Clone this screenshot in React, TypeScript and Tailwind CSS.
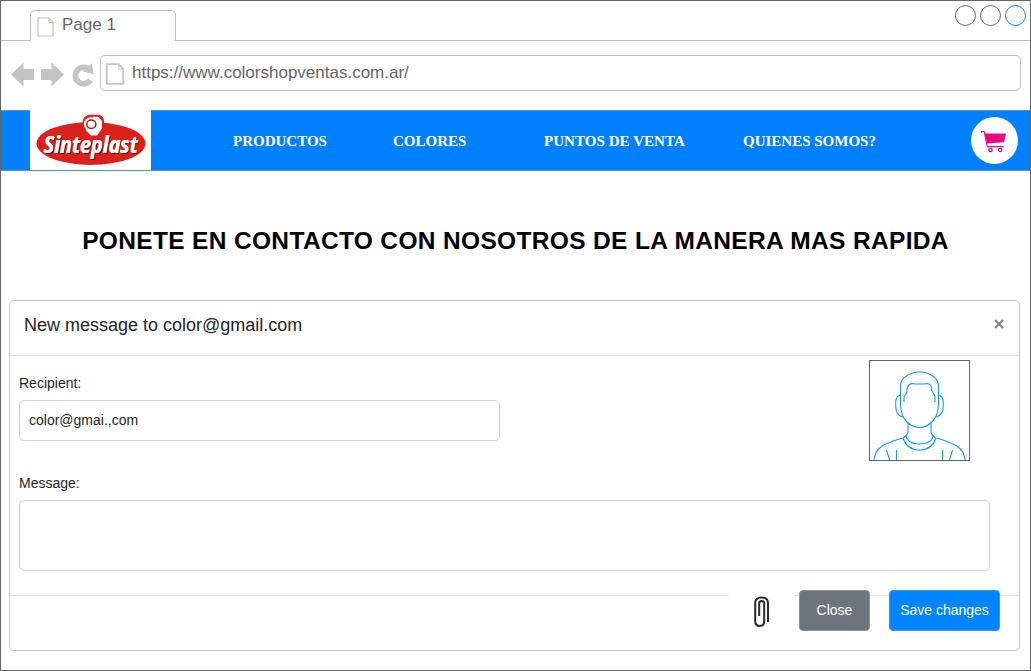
import React from "react";

function PageIcon({ className, stroke, width }: { className?: string; stroke: string; width: number }) {
  return (
    <svg className={className} viewBox="0 0 17 20" fill="none" stroke={stroke}>
      <path strokeWidth={width} d="M1 1H12L16 5.5V19H1Z" />
      <path strokeWidth="1" d="M12 1V5.5H16" />
    </svg>
  );
}

function TabStrip() {
  return (
    <div className="flex h-[40px] shrink-0">
      <div className="w-[29px] border-b border-[#bfbfbf]" />
      <div className="mt-[9px] flex w-[146px] rounded-t-[5px] border border-b-0 border-[#bfbfbf] pl-[5.5px]">
        <PageIcon className="mt-[5.5px] h-[20px] w-[17px]" stroke="#c0c0c0" width={1.2} />
        <span className="ml-[8.5px] mt-[2px] text-[17px] leading-[24px] whitespace-nowrap text-[#666666]">Page 1</span>
      </div>
      <div className="flex flex-1 justify-end gap-[4px] border-b border-[#bfbfbf] pt-[4px] pr-[4px]">
        <div className="size-[21px] rounded-full border border-[#666666]" />
        <div className="size-[21px] rounded-full border border-[#666666]" />
        <div className="size-[21px] rounded-full border border-[#008cff]" />
      </div>
    </div>
  );
}

function AddressBar() {
  return (
    <div className="flex h-[69px] shrink-0 pt-[14px] pr-[9px] pl-[10px]">
      <svg className="mt-[6px] h-[26px] w-[84px]" viewBox="11 61 84 26" fill="#c4c4c4">
        <path d="M11 74.5L23.5 62.5V69H34V80H23.5V86.5Z" />
        <path d="M64 74.5L51.5 62.5V69H41V80H51.5V86.5Z" />
        <path d="M90.4 80.2A8.2 8.2 0 1 1 88 68.6" fill="none" stroke="#c4c4c4" strokeWidth="5.8" />
        <path d="M91.7 63.3L93.8 74L82.8 71.4Z" />
      </svg>
      <div className="ml-[5px] flex h-[36px] flex-1 rounded-[5px] border border-[#bfbfbf] pl-[4px]">
        <PageIcon className="mt-[7px] h-[22px] w-[20px]" stroke="#c6c6c6" width={1.7} />
        <span className="ml-[7px] mt-[5px] text-[17px] leading-[24px] text-[#666666]">https://www.colorshopventas.com.ar/</span>
      </div>
    </div>
  );
}

function Logo() {
  return (
    <svg className="h-[60px] w-[121px] overflow-visible bg-white" viewBox="30 110 121 60">
      <ellipse cx="91" cy="143.5" rx="54.5" ry="21.5" fill="#dc211c" />
      <path d="M82.5 135V123Q82.5 115 91 114.8H99Q103.5 115.5 104 121V135Z" fill="#dc211c" />
      <path d="M85.5 130L91 135.5H97L102 128.5V121L98 116.8H93Z" fill="#fff" />
      <ellipse cx="91.3" cy="124.3" rx="7.4" ry="7" fill="#fff" />
      <ellipse cx="91.3" cy="124.3" rx="4.6" ry="4.2" fill="#fff" stroke="#b01a16" strokeWidth="1.5" />
      <text
        className="font-['Noto_Sans',sans-serif] text-[23px] font-bold italic [text-shadow:0.6px_0_0_#fff,1.4px_1px_0_#421211]"
        x="43.5"
        y="152.5"
        textLength="94"
        lengthAdjust="spacingAndGlyphs"
        fill="#fff"
      >
        Sinteplast
      </text>
    </svg>
  );
}

function CartButton() {
  return (
    <div className="mr-[12px] mt-[5.5px] size-[47px] rounded-full bg-white">
      <svg className="size-[47px]" viewBox="971 116 47 47" fill="none" stroke="#e9097f">
        <path d="M981.5 131.8V130.5H984.2L987.3 145.6H1003.5" strokeWidth="1.1" />
        <path d="M984.5 132.5H1006L1004.2 141.2L987 142.6Z" fill="#e9097f" stroke="none" />
        <circle cx="990.5" cy="149" r="1.7" strokeWidth="1.3" />
        <circle cx="1000.3" cy="149" r="1.7" strokeWidth="1.3" />
      </svg>
    </div>
  );
}

function Nav() {
  return (
    <nav className="flex h-[61px] shrink-0 border-y border-[#5f8fc4] bg-[#007fff] font-['Liberation_Serif',serif] text-[15px] leading-[60px] font-bold whitespace-nowrap text-white">
      <div className="-mt-px ml-[29px] h-[60px] w-[121px]">
        <Logo />
      </div>
      <a className="ml-[82px] w-[160px]">PRODUCTOS</a>
      <a className="w-[151px]">COLORES</a>
      <a className="w-[199px] tracking-[0.05px]">PUNTOS DE VENTA</a>
      <a className="flex-1">QUIENES SOMOS?</a>
      <CartButton />
    </nav>
  );
}

function Avatar() {
  return (
    <div className="h-[101px] w-[101px] border border-[#666666]">
      <svg className="size-[99px]" viewBox="870 361 99 99" fill="none" stroke="#1a97fb" strokeWidth="1.1">
        <path d="M900.5 397V386Q901 379 905 377Q911 372 919.5 372Q928 372 934 377Q938 380 938.5 386V397" />
        <path d="M904 402V397L907 392V389Q908 386 909 385Q911 383 915 384H924Q929 383 930.5 385Q932 387 931.5 390L935 396V402" />
        <path d="M900.5 396V405Q901 416 907 422Q913 427.5 919.5 427.5Q926 427.5 932 422Q938 416 938.5 405V396" />
        <path d="M900 395.5Q896 395.5 895.7 403Q895.5 413 899 415Q901 417 903.5 417M939 395.5Q943 395.5 943.3 403Q943.5 413 940 415Q938 417 935.5 417" />
        <path d="M908 423V432Q907 436 903 438Q894 440 882 446Q874 452 874 461M931 423V432Q932 436 936 438Q945 440 957 446Q965 452 965 461" />
        <path d="M906 435Q907 444 919.5 444Q932 444 933.5 435M903 438Q907 450 919.5 450Q932 450 936 438" />
        <path d="M886.5 450L889.5 460M896.5 450V460M952.5 450L949.5 460M942.5 450V460" />
      </svg>
    </div>
  );
}

function PaperClip() {
  return (
    <div className="flex h-[41px] w-[66px] bg-white">
      <svg className="ml-[22px] mt-[4px] h-[34px] w-[20px]" viewBox="751 594 20 34" fill="none" stroke="#282828" strokeWidth="2">
        <path d="M759.2 616V603.5Q759.2 601 761.5 601Q764.2 601 764.2 603.5V621Q764.2 626 759.7 626Q755.2 626 755.2 621V603Q755.2 597.5 761.5 597.5Q768 597.5 768 603V622" />
      </svg>
    </div>
  );
}

function MessagePanel() {
  return (
    <section className="mt-[21px] mr-[10px] ml-[8px] flex h-[351px] shrink-0 flex-col rounded-[5px] border border-[#c4c4c4]">
      <header className="flex h-[55px] shrink-0 justify-between border-b border-[#dfdfdf] pr-[15px] pl-[14px]">
        <h2 className="mt-[12px] text-[18px] leading-[24px] text-[#212529]">New message to color@gmail.com</h2>
        <svg className="mt-[18px] size-[10px]" viewBox="0 0 10 10" stroke="#808080" strokeWidth="2">
          <path d="M1 1L9 9M9 1L1 9" />
        </svg>
      </header>
      <div className="flex h-[239px] shrink-0 flex-col pr-[29px] pl-[9px] text-[14px] text-[#212529]">
        <div className="flex h-[117px] shrink-0 justify-between pr-[20px]">
          <div>
            <label className="block pt-[17px] leading-[20px]">Recipient:</label>
            <div className="mt-[7px] h-[41px] w-[481px] rounded-[5px] border border-[#ced4da] pl-[9px] leading-[38px]">color@gmai.,com</div>
          </div>
          <div className="pt-[4px]">
            <Avatar />
          </div>
        </div>
        <label className="leading-[20px]">Message:</label>
        <div className="mt-[7px] h-[71px] shrink-0 rounded-[5px] border border-[#ced4da]" />
      </div>
      <footer className="flex-1 border-t border-[#dfdfdf]">
        <div className="-mt-[6px] flex h-[41px] justify-end pr-[19px] text-center text-[14px] leading-[38px] text-white">
          <PaperClip />
          <button className="ml-[4px] w-[71px] rounded-[4px] border border-[#8a929a] bg-[#6c757d] pb-[2px]">Close</button>
          <button className="ml-[19px] w-[111px] rounded-[4px] border border-[#3399ff] bg-[#0085ff] pb-[2px]">Save changes</button>
        </div>
      </footer>
    </section>
  );
}

export default function App() {
  return (
    <div className="flex h-[671px] w-[1031px] flex-col overflow-hidden border border-[#666666] bg-white font-['Liberation_Sans',Arial,sans-serif]">
      <TabStrip />
      <AddressBar />
      <Nav />
      <h1 className="h-[108px] shrink-0 pt-[54px] text-center text-[24.5px] leading-[32px] font-bold tracking-[0.34px] whitespace-nowrap text-black">
        PONETE EN CONTACTO CON NOSOTROS DE LA MANERA MAS RAPIDA
      </h1>
      <MessagePanel />
    </div>
  );
}
